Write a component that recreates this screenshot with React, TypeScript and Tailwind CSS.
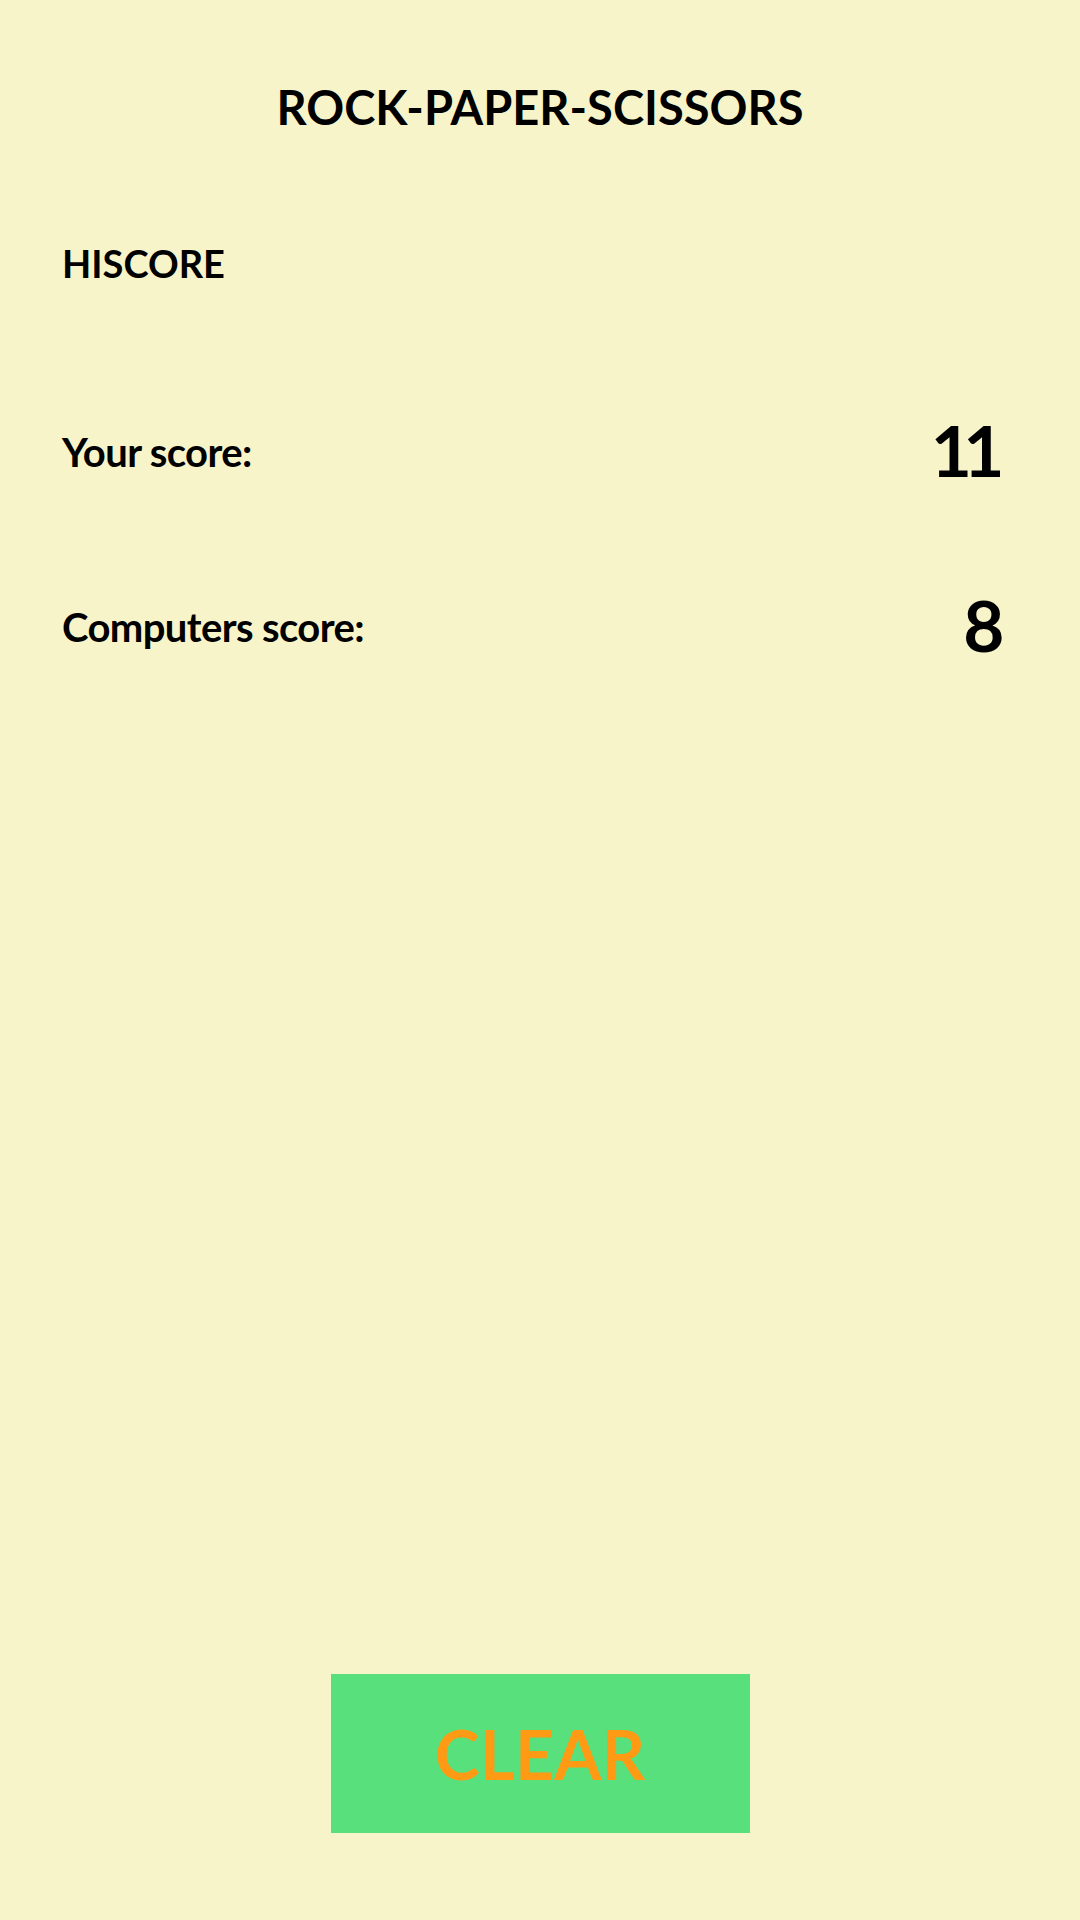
export default function App() {
    const scores = [
        { label: "Your score:", value: 11 },
        { label: "Computers score:", value: 8 },
    ];

    return (
        <div className="min-h-screen w-full bg-[#f7f4ca] flex flex-col font-['Lato','Open_Sans',sans-serif] text-black">
            <h1 className="mt-[84px] text-center text-[47px] leading-none font-bold">
                ROCK-PAPER-SCISSORS
            </h1>

            <h2 className="mt-[113px] pl-[62px] text-[38px] leading-none font-bold">
                HISCORE
            </h2>

            <div className="mt-[132px] flex flex-col gap-[104px] pl-[62px] pr-[84px]">
                {scores.map((s) => (
                    <div key={s.label} className="flex items-center justify-between">
                        <span className="mt-[4px] text-[40px] leading-none font-bold tracking-[-0.015em]">{s.label}</span>
                        <span className="text-[71px] leading-none font-bold tracking-[-0.12em]">{s.value}</span>
                    </div>
                ))}
            </div>

            <div className="mt-auto pb-[87px] flex justify-center">
                <button className="w-[419px] h-[159px] bg-[#58e07d] flex items-center justify-center text-[68px] leading-none font-bold text-[#ff9a14]">
                    CLEAR
                </button>
            </div>
        </div>
    );
}
